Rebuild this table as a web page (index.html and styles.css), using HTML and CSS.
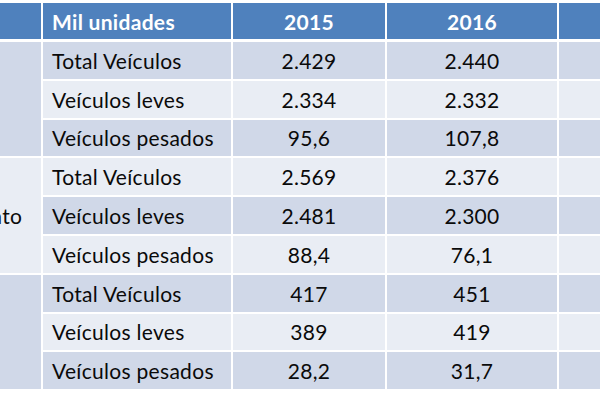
FILE: index.html
```html
<!DOCTYPE html>
<html lang="pt">
<head>
<meta charset="utf-8">
<title>Mil unidades</title>
<link rel="stylesheet" href="styles.css">
</head>
<body>
<div class="page">
  <div class="grid head">
    <div class="cell h"></div>
    <div class="cell h label">Mil unidades</div>
    <div class="cell h num">2015</div>
    <div class="cell h num">2016</div>
    <div class="cell h"></div>
  </div>
  <div class="grid body">
    <div class="cell group dark g1">Produção</div>
    <div class="cell label dark">Total Veículos</div>
    <div class="cell num dark">2.429</div>
    <div class="cell num dark">2.440</div>
    <div class="cell dark"></div>

    <div class="cell label light">Veículos leves</div>
    <div class="cell num light">2.334</div>
    <div class="cell num light">2.332</div>
    <div class="cell light"></div>

    <div class="cell label dark">Veículos pesados</div>
    <div class="cell num dark">95,6</div>
    <div class="cell num dark">107,8</div>
    <div class="cell dark"></div>

    <div class="cell group light g2">Licenciamento</div>
    <div class="cell label light">Total Veículos</div>
    <div class="cell num light">2.569</div>
    <div class="cell num light">2.376</div>
    <div class="cell light"></div>

    <div class="cell label dark">Veículos leves</div>
    <div class="cell num dark">2.481</div>
    <div class="cell num dark">2.300</div>
    <div class="cell dark"></div>

    <div class="cell label light">Veículos pesados</div>
    <div class="cell num light">88,4</div>
    <div class="cell num light">76,1</div>
    <div class="cell light"></div>

    <div class="cell group dark g3">Exportação</div>
    <div class="cell label dark">Total Veículos</div>
    <div class="cell num dark">417</div>
    <div class="cell num dark">451</div>
    <div class="cell dark"></div>

    <div class="cell label light">Veículos leves</div>
    <div class="cell num light">389</div>
    <div class="cell num light">419</div>
    <div class="cell light"></div>

    <div class="cell label dark">Veículos pesados</div>
    <div class="cell num dark">28,2</div>
    <div class="cell num dark">31,7</div>
    <div class="cell dark"></div>
  </div>
</div>
</body>
</html>
```

FILE: styles.css
```css
html, body {
  margin: 0;
  padding: 0;
  background: #ffffff;
}

.page {
  width: 600px;
  height: 400px;
  overflow: hidden;
  padding-top: 3px;
  box-sizing: border-box;
  font-family: Lato, "Open Sans", sans-serif;
  font-size: 21px;
  letter-spacing: 0.3px;
  color: #0a0a0a;
}

.grid {
  display: grid;
  grid-template-columns: 163px 188px 152px 170px 120px;
  column-gap: 2px;
  margin-left: -122px;
  width: 800px;
}

.head {
  grid-template-rows: 36px;
}

.body {
  margin-top: 3px;
  grid-template-rows: repeat(9, 36.8px);
  row-gap: 2px;
}

.cell {
  display: flex;
  align-items: center;
  white-space: nowrap;
  overflow: hidden;
}

.h {
  background: #4f81bd;
  color: #ffffff;
  font-weight: 700;
}

.dark {
  background: #d0d8e8;
}

.light {
  background: #e9edf4;
}

.label {
  padding-left: 9px;
}

.num {
  justify-content: center;
}

.group {
  padding-left: 7px;
}

.g1 { grid-row: 1 / span 3; grid-column: 1; }
.g2 { grid-row: 4 / span 3; grid-column: 1; }
.g3 { grid-row: 7 / span 3; grid-column: 1; }
```
